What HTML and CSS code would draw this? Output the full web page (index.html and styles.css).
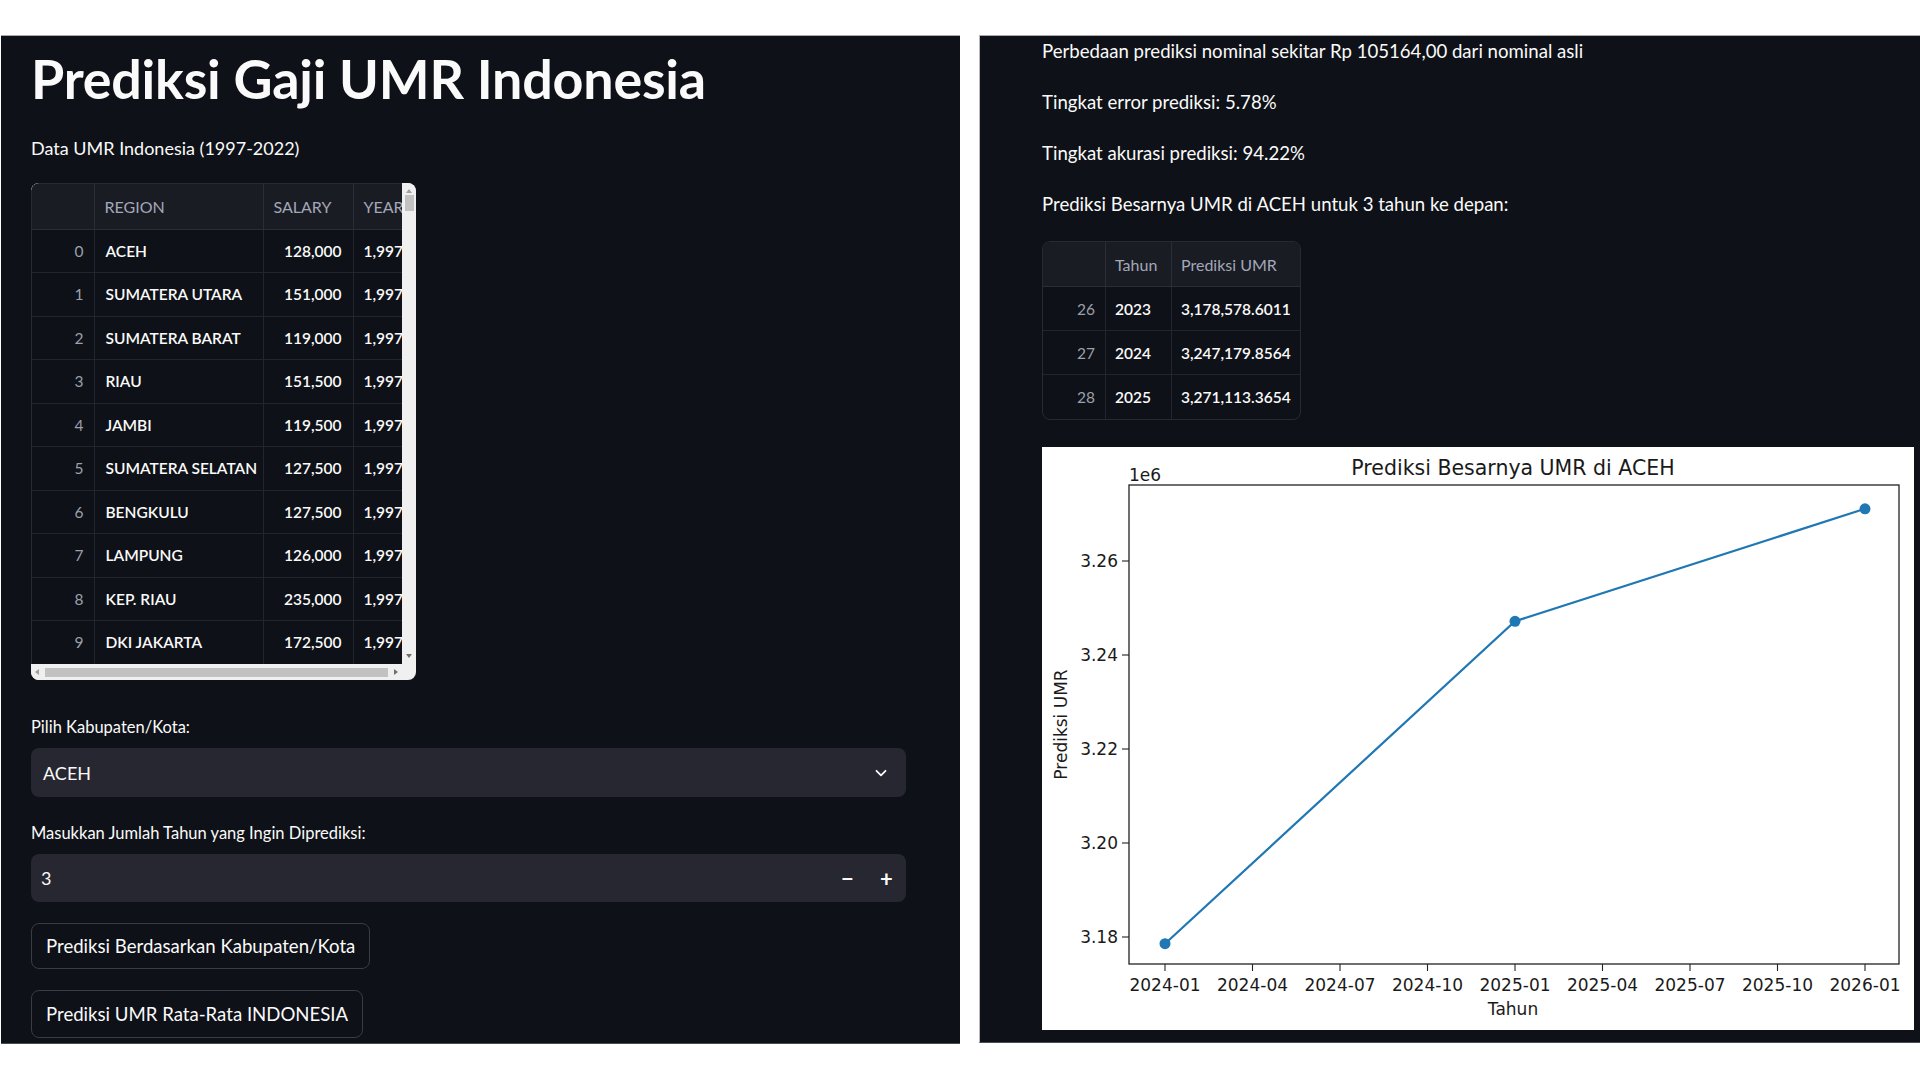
FILE: index.html
```html
<!DOCTYPE html>
<html lang="id">
<head>
<meta charset="utf-8">
<title>Prediksi Gaji UMR Indonesia</title>
<link rel="stylesheet" href="styles.css">
</head>
<body>
<div class="page">
  <section class="panel panel-left">
    <h1 class="title">Prediksi Gaji UMR Indonesia</h1>
    <p class="caption">Data UMR Indonesia (1997-2022)</p>

    <div class="grid-frame">
      <div class="grid-top">
        <div class="grid-view">
          <table class="grid">
            <colgroup><col class="c-idx"><col class="c-region"><col class="c-salary"><col class="c-year"></colgroup>
            <thead>
              <tr><th></th><th>REGION</th><th>SALARY</th><th>YEAR</th></tr>
            </thead>
            <tbody>
              <tr><td class="idx">0</td><td>ACEH</td><td class="num">128,000</td><td>1,997</td></tr>
              <tr><td class="idx">1</td><td>SUMATERA UTARA</td><td class="num">151,000</td><td>1,997</td></tr>
              <tr><td class="idx">2</td><td>SUMATERA BARAT</td><td class="num">119,000</td><td>1,997</td></tr>
              <tr><td class="idx">3</td><td>RIAU</td><td class="num">151,500</td><td>1,997</td></tr>
              <tr><td class="idx">4</td><td>JAMBI</td><td class="num">119,500</td><td>1,997</td></tr>
              <tr><td class="idx">5</td><td>SUMATERA SELATAN</td><td class="num">127,500</td><td>1,997</td></tr>
              <tr><td class="idx">6</td><td>BENGKULU</td><td class="num">127,500</td><td>1,997</td></tr>
              <tr><td class="idx">7</td><td>LAMPUNG</td><td class="num">126,000</td><td>1,997</td></tr>
              <tr><td class="idx">8</td><td>KEP. RIAU</td><td class="num">235,000</td><td>1,997</td></tr>
              <tr><td class="idx">9</td><td>DKI JAKARTA</td><td class="num">172,500</td><td>1,997</td></tr>
            </tbody>
          </table>
        </div>
        <div class="vscroll">
          <span class="arrow arrow-up"></span>
          <span class="vthumb"></span>
          <span class="vspace"></span>
          <span class="arrow arrow-down"></span>
        </div>
      </div>
      <div class="hscroll">
        <span class="arrow arrow-left"></span>
        <span class="hthumb"></span>
        <span class="arrow arrow-right"></span>
      </div>
    </div>

    <label class="wlabel wlabel-first">Pilih Kabupaten/Kota:</label>
    <div class="select">
      <span>ACEH</span>
      <svg class="chev" width="14" height="14" viewBox="0 0 14 14"><path d="M2.5 4.8 L7 9.3 L11.5 4.8" fill="none" stroke="#fafafa" stroke-width="1.8" stroke-linecap="round" stroke-linejoin="round"/></svg>
    </div>

    <label class="wlabel wlabel-second">Masukkan Jumlah Tahun yang Ingin Diprediksi:</label>
    <div class="number">
      <span class="num-val">3</span>
      <span class="step">&minus;</span>
      <span class="step">+</span>
    </div>

    <button class="btn btn-first">Prediksi Berdasarkan Kabupaten/Kota</button>
    <button class="btn btn-second">Prediksi UMR Rata-Rata INDONESIA</button>
  </section>

  <section class="panel panel-right">
    <p class="line line-first">Perbedaan prediksi nominal sekitar Rp 105164,00 dari nominal asli</p>
    <p class="line">Tingkat error prediksi: 5.78%</p>
    <p class="line">Tingkat akurasi prediksi: 94.22%</p>
    <p class="line">Prediksi Besarnya UMR di ACEH untuk 3 tahun ke depan:</p>

    <table class="ptable">
      <colgroup><col class="p-idx"><col class="p-year"><col class="p-val"></colgroup>
      <thead><tr><th></th><th>Tahun</th><th>Prediksi UMR</th></tr></thead>
      <tbody>
        <tr><td class="idx">26</td><td>2023</td><td class="num">3,178,578.6011</td></tr>
        <tr><td class="idx">27</td><td>2024</td><td class="num">3,247,179.8564</td></tr>
        <tr><td class="idx">28</td><td>2025</td><td class="num">3,271,113.3654</td></tr>
      </tbody>
    </table>

    <svg class="chart" width="872" height="583" viewBox="0 0 872 583">
      <rect width="872" height="583" fill="#ffffff"/>
      <text class="c-title" x="471" y="28" text-anchor="middle">Prediksi Besarnya UMR di ACEH</text>
      <text class="c-tick" x="87" y="34">1e6</text>

      <g stroke="#222" stroke-width="1.1">
        <line x1="80" y1="114" x2="87" y2="114"/>
        <line x1="80" y1="208" x2="87" y2="208"/>
        <line x1="80" y1="302" x2="87" y2="302"/>
        <line x1="80" y1="396" x2="87" y2="396"/>
        <line x1="80" y1="490" x2="87" y2="490"/>
        <line x1="123" y1="517" x2="123" y2="524"/>
        <line x1="210.5" y1="517" x2="210.5" y2="524"/>
        <line x1="298" y1="517" x2="298" y2="524"/>
        <line x1="385.5" y1="517" x2="385.5" y2="524"/>
        <line x1="473" y1="517" x2="473" y2="524"/>
        <line x1="560.5" y1="517" x2="560.5" y2="524"/>
        <line x1="648" y1="517" x2="648" y2="524"/>
        <line x1="735.5" y1="517" x2="735.5" y2="524"/>
        <line x1="823" y1="517" x2="823" y2="524"/>
      </g>

      <g class="c-tick" text-anchor="end">
        <text x="76" y="120">3.26</text>
        <text x="76" y="214">3.24</text>
        <text x="76" y="308">3.22</text>
        <text x="76" y="402">3.20</text>
        <text x="76" y="496">3.18</text>
      </g>
      <g class="c-tick" text-anchor="middle">
        <text x="123" y="544">2024-01</text>
        <text x="210.5" y="544">2024-04</text>
        <text x="298" y="544">2024-07</text>
        <text x="385.5" y="544">2024-10</text>
        <text x="473" y="544">2025-01</text>
        <text x="560.5" y="544">2025-04</text>
        <text x="648" y="544">2025-07</text>
        <text x="735.5" y="544">2025-10</text>
        <text x="823" y="544">2026-01</text>
      </g>
      <text class="c-tick" x="471" y="568" text-anchor="middle">Tahun</text>
      <text class="c-tick" transform="translate(25 277.5) rotate(-90)" text-anchor="middle">Prediksi UMR</text>

      <polyline points="123,496.7 473,174.3 823,61.8" fill="none" stroke="#1f77b4" stroke-width="2.2"/>
      <circle cx="123" cy="496.7" r="5.5" fill="#1f77b4"/>
      <circle cx="473" cy="174.3" r="5.5" fill="#1f77b4"/>
      <circle cx="823" cy="61.8" r="5.5" fill="#1f77b4"/>

      <rect x="87" y="38" width="770" height="479" fill="none" stroke="#222" stroke-width="1.3"/>
    </svg>
  </section>
</div>
</body>
</html>
```

FILE: styles.css
```css
* { box-sizing: border-box; }

html, body {
  margin: 0;
  padding: 0;
  background: #ffffff;
}

body {
  font-family: Lato, "Open Sans", "Liberation Sans", sans-serif;
}

.page {
  display: flex;
  align-items: flex-start;
  gap: 19px;
  padding-top: 35px;
  padding-left: 1px;
}

.panel {
  background: #0e1117;
  color: #fafafa;
  border-top: 1px solid #a9a9ad;
}

/* ---------- left panel ---------- */
.panel-left {
  width: 959px;
  height: 1009px;
  padding-left: 30px;
  display: flex;
  flex-direction: column;
  align-items: flex-start;
  border-bottom: 1px solid #4a4c55;
}

.title {
  margin: 12px 0 0 0;
  font-size: 53.8px;
  line-height: 60px;
  font-weight: 700;
  letter-spacing: -0.2px;
  color: #fafafa;
}

.caption {
  margin: 28px 0 0 0;
  font-size: 18px;
  line-height: 24px;
}

.grid-frame {
  margin-top: 23px;
  width: 385px;
  height: 497px;
  display: flex;
  flex-direction: column;
  border-radius: 8px;
  overflow: hidden;
  background: #f0f0f0;
}

.grid-top {
  display: flex;
  height: 481px;
}

.grid-view {
  width: 371px;
  height: 481px;
  overflow: hidden;
  background: #0e1117;
  border: 1px solid #262a33;
  border-right: none;
  border-bottom: none;
  border-top-left-radius: 8px;
}

.grid {
  table-layout: fixed;
  border-collapse: collapse;
  width: 392px;
  font-size: 15.5px;
}

.c-idx { width: 62px; }
.c-region { width: 169px; }
.c-salary { width: 90px; }
.c-year { width: 71px; }

.grid th {
  height: 45px;
  background: #1a1c24;
  color: #a3a8b8;
  font-weight: 400;
  font-size: 16px;
  text-align: left;
  padding: 0 0 0 10px;
  border-right: 1px solid #2b2e38;
  border-bottom: 1px solid #2b2e38;
  white-space: nowrap;
  overflow: hidden;
}

.grid td {
  height: 43.5px;
  padding: 0 11px;
  color: #fafafa;
  font-weight: 600;
  white-space: nowrap;
  overflow: hidden;
  border-right: 1px solid #22252e;
  border-bottom: 1px solid #22252e;
}

.grid td.idx,
.ptable td.idx {
  text-align: right;
  color: #9ca0ab;
  font-weight: 400;
  padding-right: 10px;
}

.grid td.num,
.ptable td.num {
  text-align: right;
}

.grid td:last-child {
  padding-left: 10px;
  padding-right: 0;
}

.vscroll {
  width: 14px;
  height: 481px;
  background: #f0f0f0;
  display: flex;
  flex-direction: column;
  align-items: center;
  border-top-right-radius: 8px;
}

.vthumb {
  width: 9px;
  height: 16px;
  background: #c2c2c2;
  margin-top: 2px;
}

.vspace { flex: 1; }

.hscroll {
  height: 16px;
  width: 371px;
  display: flex;
  align-items: center;
  padding: 0 4px;
  background: #f0f0f0;
}

.hthumb {
  flex: 1;
  height: 9px;
  margin: 0 6px;
  background: #c2c2c2;
}

.arrow {
  width: 0;
  height: 0;
  border: 3px solid transparent;
}

.arrow-up { border-bottom: 4px solid #a0a0a0; border-top: 0; margin-top: 6px; }
.arrow-down { border-top: 4px solid #707070; border-bottom: 0; margin-bottom: 6px; }
.arrow-left { border-right: 4px solid #a0a0a0; border-left: 0; }
.arrow-right { border-left: 4px solid #707070; border-right: 0; }

.wlabel {
  font-size: 16.5px;
  line-height: 22px;
  color: #fafafa;
}

.wlabel-first { margin-top: 36px; }
.wlabel-second { margin-top: 25px; }

.select {
  margin-top: 10px;
  width: 875px;
  height: 49px;
  background: #262730;
  border-radius: 8px;
  display: flex;
  align-items: center;
  justify-content: space-between;
  padding: 0 18px 0 12px;
  font-size: 18px;
}

.chev { display: block; }

.number {
  margin-top: 10px;
  width: 875px;
  height: 48px;
  background: #262730;
  border-radius: 8px;
  display: flex;
  align-items: center;
  padding-left: 10px;
  font-size: 18px;
}

.num-val { flex: 1; }

.step {
  width: 39px;
  text-align: center;
  font-size: 22px;
  font-weight: 700;
}

.btn {
  font-family: inherit;
  font-size: 18.6px;
  color: #fafafa;
  background: #0e1117;
  border: 1px solid #3a3c45;
  border-radius: 8px;
  padding: 0 14px;
  height: 46px;
  cursor: pointer;
}

.btn-first { margin-top: 21px; }
.btn-second { margin-top: 21px; height: 48px; }

/* ---------- right panel ---------- */
.panel-right {
  width: 941px;
  height: 1008px;
  padding-left: 62px;
  display: flex;
  flex-direction: column;
  align-items: flex-start;
  border-left: 1px solid #b8b8bc;
  border-bottom: 1px solid #4a4c55;
}

.line {
  margin: 0 0 27px 0;
  font-size: 18.6px;
  line-height: 24px;
}

.line-first { margin-top: 3px; }

.ptable {
  margin-top: -2px;
  table-layout: fixed;
  border-collapse: separate;
  border-spacing: 0;
  width: 257px;
  font-size: 15.5px;
  border: 1px solid #262a33;
  border-radius: 8px;
  overflow: hidden;
}

.p-idx { width: 63px; }
.p-year { width: 66px; }
.p-val { width: 128px; }

.ptable th {
  height: 45px;
  background: #1a1c24;
  color: #a3a8b8;
  font-weight: 400;
  font-size: 16px;
  text-align: left;
  padding: 0 0 0 9px;
  border-right: 1px solid #2b2e38;
  border-bottom: 1px solid #2b2e38;
}

.ptable td {
  height: 44px;
  padding: 0 9px;
  font-weight: 600;
  border-right: 1px solid #22252e;
  border-bottom: 1px solid #22252e;
  white-space: nowrap;
}

.ptable th:last-child,
.ptable td:last-child { border-right: none; }

.ptable tr:last-child td { border-bottom: none; }

.ptable td.num { padding-right: 11px; }

.chart {
  display: block;
  margin-top: 27px;
}

.c-title {
  font-family: "DejaVu Sans", sans-serif;
  font-size: 20.5px;
  fill: #1a1a1a;
}

.c-tick {
  font-family: "DejaVu Sans", sans-serif;
  font-size: 17px;
  fill: #1a1a1a;
}
```
